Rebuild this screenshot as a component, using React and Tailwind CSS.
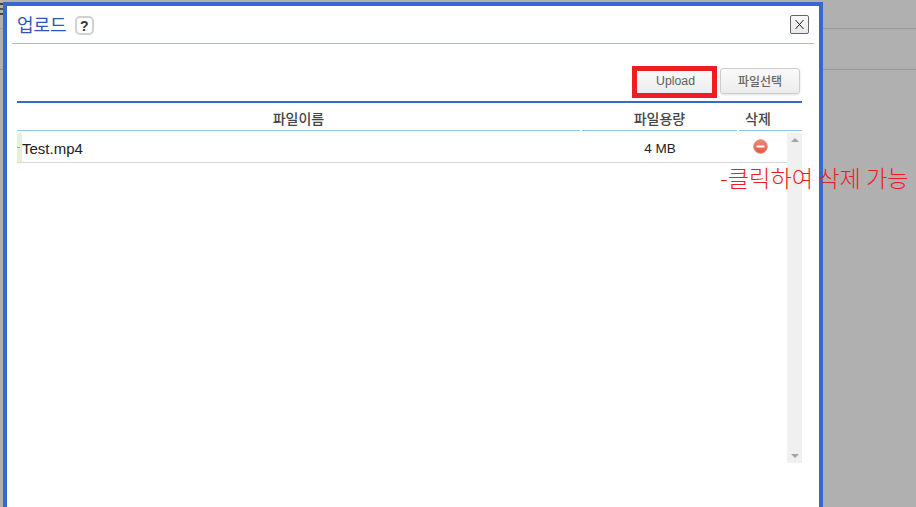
const kr = { fontFamily: '"Noto Sans CJK KR", "Liberation Sans", sans-serif' };
const lat = { fontFamily: '"Liberation Sans", "Noto Sans CJK KR", sans-serif' };

export default function App() {
  return (
    <div className="relative h-[507px] w-[916px] overflow-hidden bg-[#b0b0b0]" style={kr}>
      <div className="h-[29px] border-b border-[#999]" />
      <div className="h-[41px] border-b border-[#999]" />
      <div className="absolute left-0 top-[3px] flex h-[12px] w-[3px] flex-col justify-between">
        <div className="h-[2px] bg-[#444]" />
        <div className="h-[2px] bg-[#555]" />
        <div className="h-[2px] bg-[#444]" />
      </div>
      <div className="absolute left-[3px] top-[2px] h-[520px] w-[820px] border-4 border-[#3a66d0] bg-white px-[5px]">
        <div className="flex h-[38px] items-center border-b border-[#8fc9e2] pl-[5px]">
          <span className="-translate-y-[1px] text-[18px] leading-none text-[#2d55b8]">업로드</span>
          <span className="ml-[8px] flex h-[19px] w-[19px] translate-y-[1px] items-center justify-center rounded-[5px] border-2 border-[#d0d0d0] text-[14px] font-bold leading-none text-[#333]" style={lat}>?</span>
          <button className="ml-auto mr-[5px] flex h-[19px] w-[19px] items-center justify-center rounded-[2px] border border-[#666] bg-gradient-to-b from-[#fafafa] to-[#e8e8e8]">
            <svg width="11" height="11" viewBox="0 0 11 11" stroke="#222" strokeWidth="1"><path d="M1.5 1l8 9M9.5 1l-8 9" /></svg>
          </button>
        </div>
        <div className="ml-[5px] mr-[12px]">
          <div className="flex h-[57px] items-start justify-end pr-[2px] pt-[22px]">
            <div className="mr-[3px] border-[5px] border-[#ee1c25]">
              <button className="block h-[22px] w-[75px] bg-gradient-to-b from-[#fafafa] to-[#ececec] pb-[2px] pl-[2px] text-[12.3px] leading-none text-[#5f5f5f]" style={lat}>Upload</button>
            </div>
            <button className="mt-[2px] h-[26px] w-[80px] rounded-[3px] border border-[#ccc] bg-gradient-to-b from-[#fafafa] to-[#ececec] text-[12px] font-medium leading-none text-[#666] shadow-sm">파일선택</button>
          </div>
          <div className="border-t-2 border-[#3a66d0]">
            <div className="flex h-[28px] gap-[2px] text-[14px] font-medium leading-none text-[#444]">
              <div className="flex w-[563px] items-center justify-center border-b border-[#8fc9e2] pt-[2px]">파일이름</div>
              <div className="flex w-[155px] items-center justify-center border-b border-[#8fc9e2] pt-[2px]">파일용량</div>
              <div className="flex w-[63px] items-center justify-center border-b border-[#8fc9e2] pr-[25px] pt-[2px]">삭제</div>
            </div>
            <div className="mt-[2px] flex h-[330px]">
              <div className="w-[770px]">
                <div className="flex h-[30px] items-center border-b border-[#d8d8d8] text-[15px] text-[#222]" style={lat}>
                  <div className="flex h-full w-[5px] items-center rounded-t-[2px] bg-[#e4f3d6]">
                    <div className="h-[1px] w-[3px] bg-[#aaa]" />
                  </div>
                  <div className="w-[558px] pt-[4px]">Test.mp4</div>
                  <div className="w-[159px] pl-[1px] pt-[4px] text-center text-[13.5px]">4 MB</div>
                  <div className="flex flex-1 justify-center pb-[2px] pr-[6px]">
                    <svg width="15" height="15" viewBox="0 0 15 15">
                      <defs>
                        <linearGradient id="rm" x1="0" y1="0" x2="0" y2="1">
                          <stop offset="0" stopColor="#f08a7a" />
                          <stop offset="1" stopColor="#e5553f" />
                        </linearGradient>
                      </defs>
                      <circle cx="7.5" cy="7.5" r="6.8" fill="url(#rm)" stroke="#d98a7c" />
                      <rect x="3.5" y="6.5" width="8" height="2" fill="#fff" />
                    </svg>
                  </div>
                </div>
              </div>
              <div className="flex w-[15px] flex-col items-center justify-between bg-[#f0f0f0] py-[5px]">
                <div className="h-0 w-0 border-x-[4px] border-b-[4px] border-x-transparent border-b-[#a3a3a3]" />
                <div className="h-0 w-0 border-x-[4px] border-t-[4px] border-x-transparent border-t-[#a3a3a3]" />
              </div>
            </div>
          </div>
        </div>
      </div>
      <div className="absolute left-[720px] top-[163px] whitespace-nowrap text-[23.2px] font-light leading-[28px] text-[#ee1c25]">-클릭하여 삭제 가능</div>
    </div>
  );
}
